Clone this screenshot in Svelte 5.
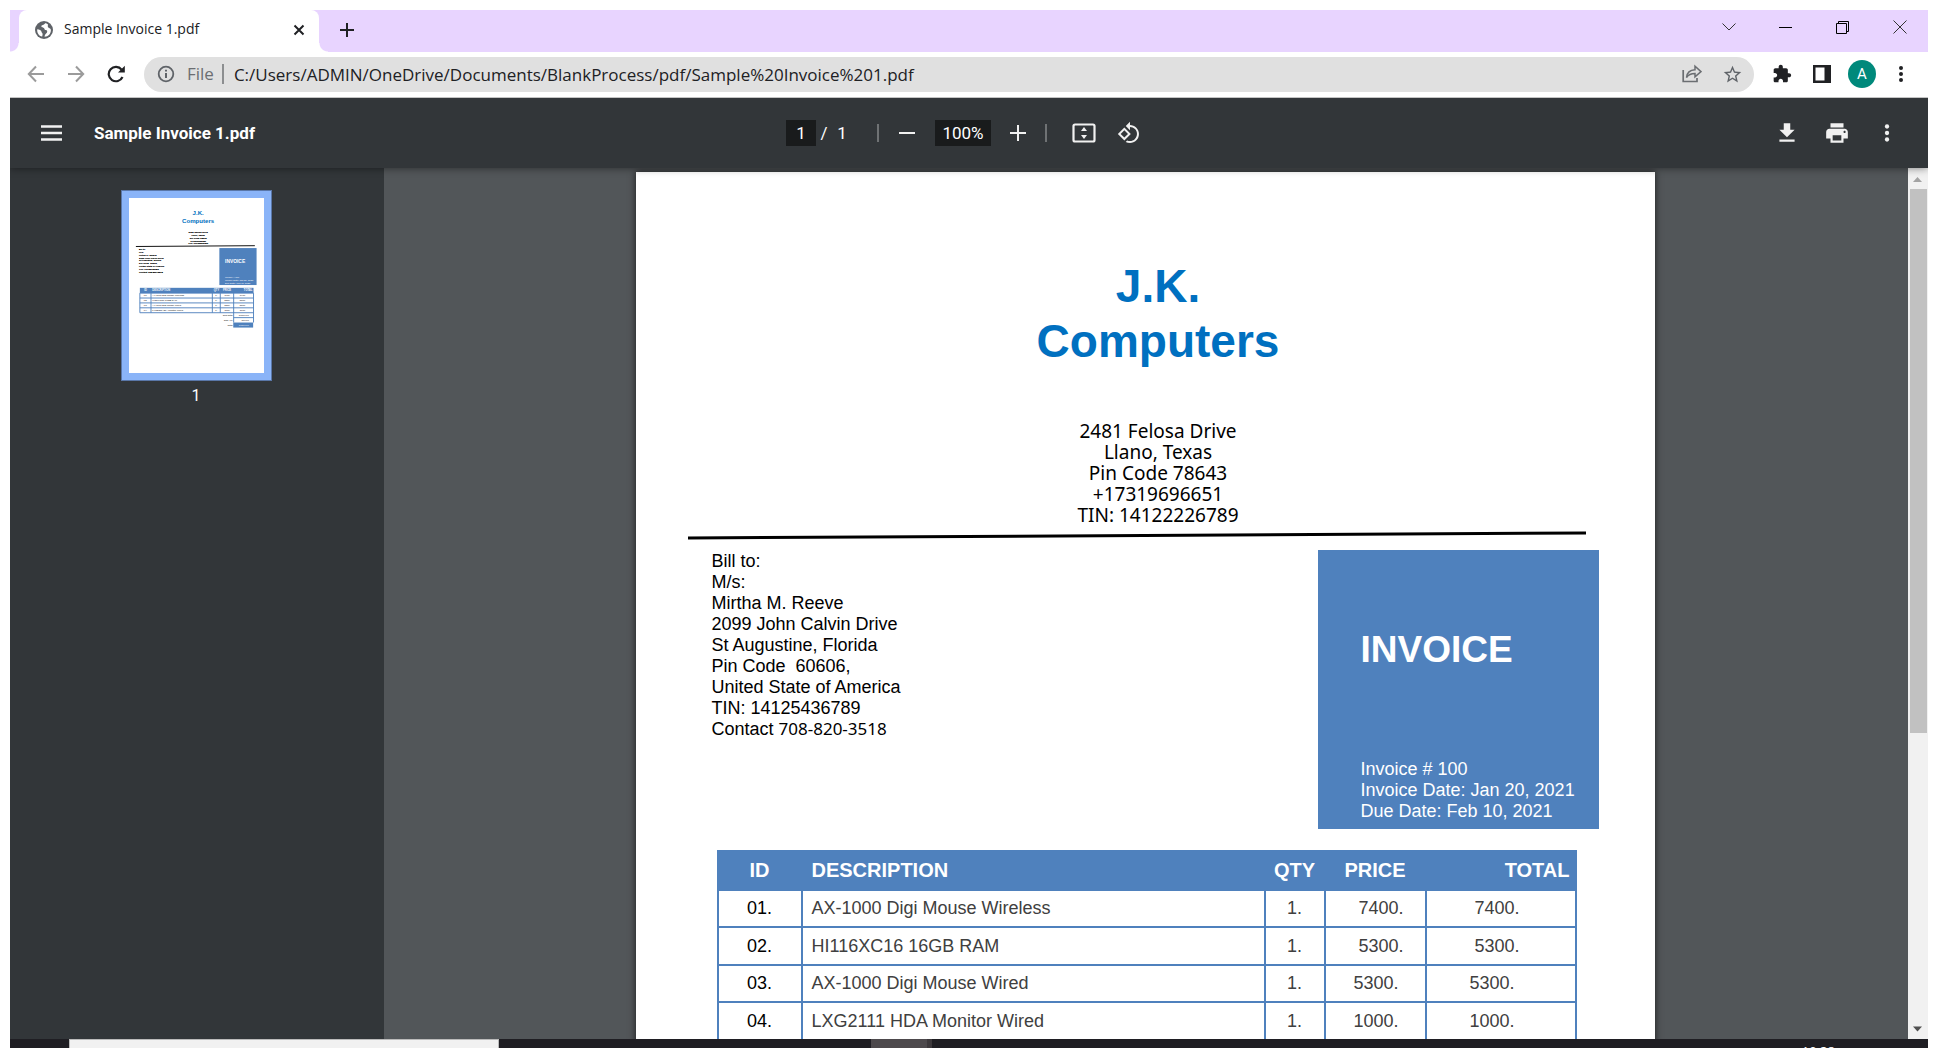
<script>
  const address = ['2481 Felosa Drive', 'Llano, Texas', 'Pin Code 78643', '+17319696651', 'TIN: 14122226789'];
  const billTo = [
    'Bill to:',
    'M/s:',
    'Mirtha M. Reeve',
    '2099 John Calvin Drive',
    'St Augustine, Florida',
    'Pin Code \u00a060606,',
    'United State of America',
    'TIN: 14125436789'
  ];
  const details = ['Invoice # 100', 'Invoice Date: Jan 20, 2021', 'Due Date: Feb 10, 2021'];
  const items = [
    { id: '01.', name: 'AX-1000 Digi Mouse Wireless', qty: '1.', price: '7400.', total: '7400.' },
    { id: '02.', name: 'HI116XC16 16GB RAM', qty: '1.', price: '5300.', total: '5300.' },
    { id: '03.', name: 'AX-1000 Digi Mouse Wired', qty: '1.', price: '5300.\u00a0', total: '5300.\u00a0' },
    { id: '04.', name: 'LXG2111 HDA Monitor Wired', qty: '1.', price: '1000.\u00a0', total: '1000.\u00a0' }
  ];
  const totals = [
    ['Sub Total', '19000.00'],
    ['GST 4%', '760.00'],
    ['Total', '19760.00']
  ];
</script>

<div class="window">
  <header class="tabstrip">
    <div class="tab">
      <svg class="i18" viewBox="0 0 18 18" aria-hidden="true">
        <circle cx="9" cy="9" r="9" fill="#5f6368" />
        <path d="M10 2.2 C9.5 4.2 6 3.6 6.4 5.6 C6.8 7.2 9 6 9.4 8 C9.8 9.6 12.4 8.4 12.2 10.6 C12 13 9.8 12.6 9.6 15.8 C13.4 15.6 16 12.6 15.9 9 C15.6 6.8 13.6 7.4 13 6 C12.4 4.6 13.2 4 13 3.4 C12.2 2.6 11 2.2 10 2.2 Z M2.2 8.4 C3.4 8.2 6.4 9.2 6.6 11 C6.8 12 7.8 12.2 7.6 13.4 L7.2 15.6 C3.8 14.6 1.9 12 2.2 8.4 Z" fill="#fff" />
      </svg>
      <span class="tabtitle">Sample Invoice 1.pdf</span>
      <button class="icon" aria-label="Close tab">
        <svg width="12" height="12" viewBox="0 0 12 12"><path d="M1.5 1.5 10.5 10.5M10.5 1.5 1.5 10.5" stroke="#202124" stroke-width="2" /></svg>
      </button>
    </div>
    <button class="icon newtab" aria-label="New tab">
      <svg width="16" height="16" viewBox="0 0 16 16"><path d="M8 1V15M1 8H15" stroke="#202124" stroke-width="2" /></svg>
    </button>
    <div class="caption">
      <button class="icon" aria-label="Search tabs"><svg width="14" height="14" viewBox="0 0 14 14"><path d="M.5 3.5 7 10 13.5 3.5" fill="none" stroke="#333" /></svg></button>
      <button class="icon" aria-label="Minimize"><svg width="14" height="14" viewBox="0 0 14 14"><path d="M0 7.5H13" stroke="#000" /></svg></button>
      <button class="icon" aria-label="Restore"><svg width="14" height="14" viewBox="0 0 14 14"><path d="M.5 3.5H10.5V13.5H.5ZM2.5 3V1.5H12.5V11.5H11" fill="none" stroke="#000" /></svg></button>
      <button class="icon" aria-label="Close"><svg width="14" height="14" viewBox="0 0 14 14"><path d="M.5 .5 13.5 13.5M13.5 .5 .5 13.5" stroke="#333" /></svg></button>
    </div>
  </header>

  <nav class="browserbar">
    <div class="navbuttons">
      <button class="icon" aria-label="Back"><svg width="18" height="18" viewBox="0 0 18 18"><path d="M17 9H2M9 1.5 1.8 9 9 16.5" fill="none" stroke="#9b9b9b" stroke-width="2" /></svg></button>
      <button class="icon" aria-label="Forward"><svg width="18" height="18" viewBox="0 0 18 18"><path d="M1 9H16M9 1.5 16.2 9 9 16.5" fill="none" stroke="#9b9b9b" stroke-width="2" /></svg></button>
      <button class="icon" aria-label="Reload"><svg width="18" height="18" viewBox="0 0 18 18"><path d="M15.5 12A7.2 7.2 0 1 1 14.6 4.6" fill="none" stroke="#202124" stroke-width="2.2" /><path d="M17.8 .8V7.6H11Z" fill="#202124" /></svg></button>
    </div>
    <div class="omnibox">
      <svg class="i18" viewBox="0 0 18 18" aria-hidden="true"><circle cx="9" cy="9" r="7.3" fill="none" stroke="#5f6368" stroke-width="1.8" /><path d="M9 8V13M9 4.8V6.6" stroke="#5f6368" stroke-width="2" /></svg>
      <span class="scheme">File</span>
      <input class="url" aria-label="Address" value="C:/Users/ADMIN/OneDrive/Documents/BlankProcess/pdf/Sample%20Invoice%201.pdf" />
      <button class="icon" aria-label="Share"><svg width="20" height="20" viewBox="0 0 20 20"><path d="M1.2 6V17.5H15V14" fill="none" stroke="#6b6e72" stroke-width="1.7" /><path d="M4.5 13.5C5 8.5 8 6 13 5.8V2.2L19 7.6 13 12.8V9.6C9 9.6 6.5 10.5 4.5 13.5Z" fill="none" stroke="#6b6e72" stroke-width="1.5" /></svg></button>
      <button class="icon" aria-label="Bookmark"><svg width="21" height="21" viewBox="0 0 24 24"><path d="M22 9.24l-7.19-.62L12 2 9.19 8.63 2 9.24l5.46 4.73L5.82 21 12 17.27 18.18 21l-1.63-7.03L22 9.24zM12 15.4l-3.76 2.27 1-4.28-3.32-2.88 4.38-.38L12 6.1l1.71 4.04 4.38.38-3.32 2.88 1 4.28L12 15.4z" fill="#5f6368" /></svg></button>
    </div>
    <div class="actions">
      <button class="icon" aria-label="Extensions"><svg width="20" height="20" viewBox="0 0 24 24"><path d="M20.5 11H19V7c0-1.1-.9-2-2-2h-4V3.500C13 2.120 11.880 1 10.500 1S8 2.120 8 3.500V5H4c-1.100 0-1.990.9-1.990 2v3.800H3.500c1.490 0 2.700 1.210 2.700 2.700s-1.210 2.700-2.700 2.700H2V20c0 1.100.9 2 2 2h3.800v-1.500c0-1.490 1.210-2.700 2.700-2.700 1.490 0 2.700 1.210 2.700 2.700V22H17c1.100 0 2-.9 2-2v-4h1.500c1.380 0 2.500-1.120 2.500-2.500S21.880 11 20.500 11z" fill="#202124" /></svg></button>
      <button class="icon" aria-label="Side panel"><svg width="18" height="18" viewBox="0 0 18 18"><path d="M0 0H18V18H0ZM2.500 2.500V15.500H11.500V2.500Z" fill="#202124" fill-rule="evenodd" /></svg></button>
      <button class="avatar" aria-label="Profile">A</button>
      <button class="icon" aria-label="Browser menu"><svg width="18" height="18" viewBox="0 0 18 18" fill="#202124"><circle cx="9" cy="3" r="2" /><circle cx="9" cy="9" r="2" /><circle cx="9" cy="15" r="2" /></svg></button>
    </div>
  </nav>

  <div class="pdfbar">
    <div class="docname">
      <button class="icon" aria-label="Toggle sidebar"><svg width="22" height="16" viewBox="0 0 22 16"><path d="M0 1.500H21M0 8H21M0 14.500H21" stroke="#f1f1f1" stroke-width="2.400" /></svg></button>
      <span>Sample Invoice 1.pdf</span>
    </div>
    <div class="controls">
      <input class="pageno" aria-label="Page number" value="1" />
      <span class="of">/</span><span class="count">1</span>
      <span class="divider"></span>
      <button class="icon" aria-label="Zoom out"><svg width="16" height="16" viewBox="0 0 16 16"><path d="M0 8H16" stroke="#f1f1f1" stroke-width="2" /></svg></button>
      <input class="zoom" aria-label="Zoom level" value="100%" />
      <button class="icon" aria-label="Zoom in"><svg width="16" height="16" viewBox="0 0 16 16"><path d="M0 8H16M8 0V16" stroke="#f1f1f1" stroke-width="2" /></svg></button>
      <span class="divider"></span>
      <button class="icon fit" aria-label="Fit to page"><svg width="24" height="20" viewBox="0 0 24 20"><rect x="1.500" y="1.500" width="21" height="17" rx="1.500" fill="none" stroke="#f1f1f1" stroke-width="2.200" /><path d="M12 4 15 8H9ZM12 16 15 12H9Z" fill="#f1f1f1" /></svg></button>
      <button class="icon" aria-label="Rotate"><svg width="24" height="24" viewBox="0 0 24 24"><path d="M7.340 6.410.86 12.900l6.490 6.480 6.490-6.480-6.500-6.490zM3.690 12.900l3.660-3.660L11 12.900l-3.660 3.660-3.650-3.660zm15.670-6.260C17.610 4.880 15.300 4 13 4V.76L8.760 5 13 9.240V6c1.790 0 3.580.68 4.950 2.050 2.730 2.730 2.730 7.170 0 9.900C16.580 19.320 14.790 20 13 20c-.970 0-1.940-.210-2.840-.610l-1.490 1.490C10.020 21.620 11.510 22 13 22c2.300 0 4.610-.880 6.360-2.640 3.520-3.510 3.520-9.210 0-12.720z" fill="#f1f1f1" /></svg></button>
    </div>
    <div class="right">
      <button class="icon" aria-label="Download"><svg width="26" height="26" viewBox="0 0 24 24"><path d="M19 9h-4V3H9v6H5l7 7 7-7zM5 18v2h14v-2H5z" fill="#f1f1f1" /></svg></button>
      <button class="icon" aria-label="Print"><svg width="26" height="26" viewBox="0 0 24 24"><path d="M19 8H5c-1.660 0-3 1.340-3 3v6h4v4h12v-4h4v-6c0-1.660-1.340-3-3-3zm-3 11H8v-5h8v5zm3-7c-.550 0-1-.450-1-1s.450-1 1-1 1 .450 1 1-.450 1-1 1zm-1-9H6v4h12V3z" fill="#f1f1f1" /></svg></button>
      <button class="icon" aria-label="More actions"><svg width="26" height="26" viewBox="0 0 24 24" fill="#f1f1f1"><circle cx="12" cy="6" r="2" /><circle cx="12" cy="12" r="2" /><circle cx="12" cy="18" r="2" /></svg></button>
    </div>
  </div>

  <main>
    <aside>
      <button class="thumb" aria-label="Page 1 thumbnail">
        <svg viewBox="0 0 1019 1321" font-family="Liberation Sans, Arial, sans-serif" font-size="18">
          <rect width="1019" height="1321" fill="#fff" />
          <g fill="#0070c0" font-size="46" font-weight="bold" text-anchor="middle">
            <text x="522" y="132">J.K.</text>
            <text x="522" y="187">Computers</text>
          </g>
          <g stroke="#000" stroke-width="1">
            {#each address as line, i}
              <text x="522" y={266 + i * 21} text-anchor="middle">{line}</text>
            {/each}
            {#each billTo as line, i}
              <text x="76" y={395 + i * 21}>{line}</text>
            {/each}
            <text x="76" y="563">Contact 708-820-3518</text>
          </g>
          <path d="M52 366 950 360" stroke="#000" stroke-width="7" />
          <rect x="682" y="378" width="281" height="279" fill="#4f81bd" />
          <text x="725" y="490" fill="#fff" font-size="37" font-weight="bold">INVOICE</text>
          {#each details as line, i}
            <text x="725" y={604 + i * 21} fill="#fff">{line}</text>
          {/each}
          <rect x="82" y="678" width="858" height="40" fill="#4f81bd" />
          <g fill="#fff" font-size="20" font-weight="bold">
            <text x="116" y="705">ID</text><text x="176" y="705">DESCRIPTION</text><text x="640" y="705">QTY</text><text x="710" y="705">PRICE</text><text x="867" y="705">TOTAL</text>
          </g>
          <path d="M82 718H940M82 755H940M82 792H940M82 829H940M82 866H940M82 718V866M166 718V866M629 718V866M689 718V866M790 718V940M940 718V940M790 903H940" stroke="#4f81bd" stroke-width="7" fill="none" />
          {#each items as item, i}
            <text x="112" y={742 + i * 37}>{item.id}</text>
            <text x="176" y={742 + i * 37}>{item.name}</text>
            <text x="652" y={742 + i * 37}>{item.qty}</text>
            <text x="720" y={742 + i * 37}>{item.price}</text>
            <text x="836" y={742 + i * 37}>{item.total}</text>
          {/each}
          <rect x="787" y="940" width="150" height="38" fill="#4f81bd" />
          {#each totals as [label, value], i}
            <text x="782" y={892 + i * 37} text-anchor="end">{label}</text>
            <text x="904" y={892 + i * 37} text-anchor="end" fill={i === 2 ? '#fff' : '#000'}>{value}</text>
          {/each}
        </svg>
      </button>
      <span class="thumbno">1</span>
    </aside>

    <section class="viewer">
      <article class="page">
        <h1>J.K.<br />Computers</h1>
        <address>
          {#each address as line}<div>{line}</div>{/each}
        </address>
        <svg class="rule" viewBox="0 0 898 10" preserveAspectRatio="none" aria-hidden="true"><path d="M0 7 898 2" stroke="#000" stroke-width="3" /></svg>
        <div class="parties">
          <div class="bill">
            {#each billTo as line}<div>{line}</div>{/each}
            <div>Contact <span class="phone">708-820-3518</span></div>
          </div>
          <div class="badge">
            <h2>INVOICE</h2>
            {#each details as line}<div>{line}</div>{/each}
          </div>
        </div>
        <table>
          <colgroup><col class="c-id" /><col class="c-name" /><col class="c-qty" /><col class="c-price" /><col class="c-total" /></colgroup>
          <thead>
            <tr><th>ID</th><th class="name">DESCRIPTION</th><th>QTY</th><th>PRICE</th><th class="totalhead">TOTAL</th></tr>
          </thead>
          <tbody>
            {#each items as item}
              <tr>
                <td class="id">{item.id}</td>
                <td class="name">{item.name}</td>
                <td>{item.qty}</td>
                <td class="price">{item.price}</td>
                <td class="total">{item.total}</td>
              </tr>
            {/each}
          </tbody>
        </table>
      </article>
    </section>

    <div class="scrollbar" aria-hidden="true">
      <svg width="20" height="21" viewBox="0 0 20 21"><path d="M5 14 9.500 9 14 14Z" fill="#a3a3a3" /></svg>
      <div class="grip"></div>
      <svg class="down" width="20" height="20" viewBox="0 0 20 20"><path d="M5 7.500 9.500 12.500 14 7.500Z" fill="#505050" /></svg>
    </div>
  </main>

  <footer class="taskbar">
    <div class="search"></div>
    <div class="running"></div>
    <span class="clock">10:38</span>
  </footer>
</div>

<style>
  :global(body) { margin: 0; background: #fff; }
  * { box-sizing: border-box; }
  .window {
    display: flex;
    flex-direction: column;
    height: 100vh;
    padding: 10px 10px 0;
    overflow: hidden;
    font-family: 'Open Sans', 'Noto Sans', sans-serif;
  }
  svg { display: block; flex: none; }
  button { padding: 0; border: 0; background: none; font: inherit; }
  input { border: 0; padding: 0; margin: 0; font: inherit; background: none; min-width: 0; }
  .icon { display: grid; place-items: center; width: 28px; height: 28px; flex: none; }
  .i18 { width: 18px; height: 18px; }

  .tabstrip { display: flex; align-items: stretch; height: 42px; flex: none; background: #e8d4ff; padding-left: 9px; }
  .tab {
    display: flex;
    align-items: center;
    width: 300px;
    padding: 0 6px 2px 16px;
    background: #fff;
    border-radius: 8px 8px 0 0;
    position: relative;
  }
  .tab::before, .tab::after { content: ''; position: absolute; bottom: 0; width: 9px; height: 9px; }
  .tab::before { left: -9px; background: radial-gradient(circle at 0 0, #e8d4ff 8px, #fff 9px); }
  .tab::after { right: -9px; background: radial-gradient(circle at 100% 0, #e8d4ff 8px, #fff 9px); }
  .tabtitle { flex: 1; padding: 0 0 2px 11px; font-size: 14px; line-height: 20px; color: #202124; }
  .newtab { margin: 6px 0 0 14px; }
  .caption { display: flex; margin-left: auto; gap: 29px; padding: 3px 14px 0 0; }

  .browserbar { display: flex; align-items: center; height: 46px; flex: none; padding: 0 13px 1px 12px; background: #fff; border-bottom: 1px solid #c4c4c4; }
  .navbuttons { display: flex; gap: 12px; margin-right: 14px; }
  .omnibox { display: flex; align-items: center; flex: 1; height: 35px; border-radius: 18px; background: #e0e0e0; padding: 0 8px 0 13px; font-size: 17px; gap: 4px; }
  .scheme { color: #6b6e72; padding: 0 8px 0 8px; border-right: 2px solid #8c8e90; line-height: 20px; }
  .url { flex: 1; padding-left: 6px; color: #202124; }
  .omnibox .icon + .icon { margin-left: 8px; }
  .actions { display: flex; align-items: center; gap: 12px; margin-left: 14px; }
  .avatar { width: 28px; height: 28px; border-radius: 50%; background: #00897b; color: #fff; font: 15px/28px Roboto, sans-serif; }
  .actions .avatar + .icon { margin-left: -1px; }

  .pdfbar {
    display: grid;
    grid-template-columns: 1fr auto 1fr;
    align-items: center;
    height: 70px;
    flex: none;
    background: #323639;
    color: #fff;
    font-family: Roboto, sans-serif;
    font-size: 17px;
    box-shadow: 0 0 8px rgba(0, 0, 0, 0.5);
    clip-path: inset(0 0 -10px 0);
    z-index: 1;
  }
  .docname { display: flex; align-items: center; gap: 28px; padding-left: 28px; font-weight: 700; }
  .controls { display: flex; align-items: center; margin-right: 9px; }
  .controls input { height: 26px; background: #191b1c; color: #fff; text-align: center; }
  .pageno { width: 30px; }
  .of { width: 16px; text-align: center; }
  .count { width: 20px; text-align: center; }
  .divider { width: 2px; height: 18px; background: #6f7274; margin: 0 14px 0 25px; }
  .zoom { width: 56px; margin: 0 13px 0 14px; }
  .zoom + .icon + .divider { margin: 0 23px 0 13px; }
  .fit { margin-right: 17px; }
  .right { display: flex; justify-content: flex-end; gap: 22px; padding-right: 27px; }

  main { display: flex; flex: 1; min-height: 0; }
  aside { width: 374px; flex: none; background: #323639; display: flex; flex-direction: column; align-items: center; padding: 22px 2px 0 0; }
  .thumb { width: 151px; border: 1px solid #5a77a8; background: #8ab4f8; padding: 7px; }
  .thumb svg { width: 100%; height: auto; }
  .thumbno { margin-top: 5px; color: #fff; font: 16px/20px Roboto, sans-serif; }
  .viewer { flex: 1; min-width: 0; background: #525659; padding: 4px 2px 0 0; overflow: hidden; }
  .scrollbar { width: 20px; flex: none; background: #f1f1f1; display: flex; flex-direction: column; }
  .grip { height: 62.5%; margin: 0 1px 0 2px; background: #c1c1c1; }
  .down { margin-top: auto; }

  .page {
    width: 1019px;
    max-width: 100%;
    min-height: 1321px;
    margin: 0 auto;
    padding: 87px 56px 0 52px;
    background: #fff;
    box-shadow: 0 0 7px rgba(0, 0, 0, 0.7);
    font: 18px/21px 'Liberation Sans', Arial, sans-serif;
    color: #000;
  }
  h1, address { padding-left: 30px; text-align: center; }
  h1 { margin: 0; font-size: 46px; line-height: 55px; color: #0070c0; }
  address { margin-top: 52px; font-family: 'Noto Sans', sans-serif; font-size: 19px; font-style: normal; }
  .rule { width: calc(100% - 13px); height: 10px; margin: 5px 0 9px; }
  .parties { display: flex; justify-content: space-between; padding-left: 24px; }
  .bill { padding-top: 1px; }
  .phone { font-family: 'Noto Sans', sans-serif; font-size: 17px; line-height: 20px; }
  .badge { width: 281px; padding: 78px 0 7px 43px; background: #4f81bd; color: #fff; }
  h2 { margin: 0 0 87px; font-size: 37px; line-height: 44px; }
  table { width: 858px; margin: 21px 0 0 29px; border-collapse: collapse; table-layout: fixed; }
  .c-id { width: 84px; }
  .c-name { width: 463px; }
  .c-qty { width: 60px; }
  .c-price { width: 101px; }
  .c-total { width: 150px; }
  th, td { padding: 0; border: 2px solid #4f81bd; text-align: center; }
  th { height: 39px; background: #4f81bd; color: #fff; font-size: 20px; }
  td { height: 37px; color: #404040; }
  tr:nth-child(even) td { height: 38px; }
  td.id { color: #000; }
  .name { text-align: left; padding-left: 9px; }
  .totalhead { text-align: right; padding-right: 5px; }
  .price { text-align: right; padding-right: 21px; }
  .total { text-align: right; padding-right: 55px; }

  .taskbar { display: flex; height: 9px; flex: none; background: #1f1e23; overflow: hidden; padding-left: 59px; }
  .search { width: 430px; background: #f1f1f1; border: 1px solid #bbb; border-bottom: 0; }
  .running { width: 61px; margin-left: 372px; background: #4d494c; border-right: 5px solid #3c383b; }
  .clock { margin-left: auto; padding: 3px 93px 0 0; color: #fff; font-size: 13px; line-height: 18px; }
</style>
